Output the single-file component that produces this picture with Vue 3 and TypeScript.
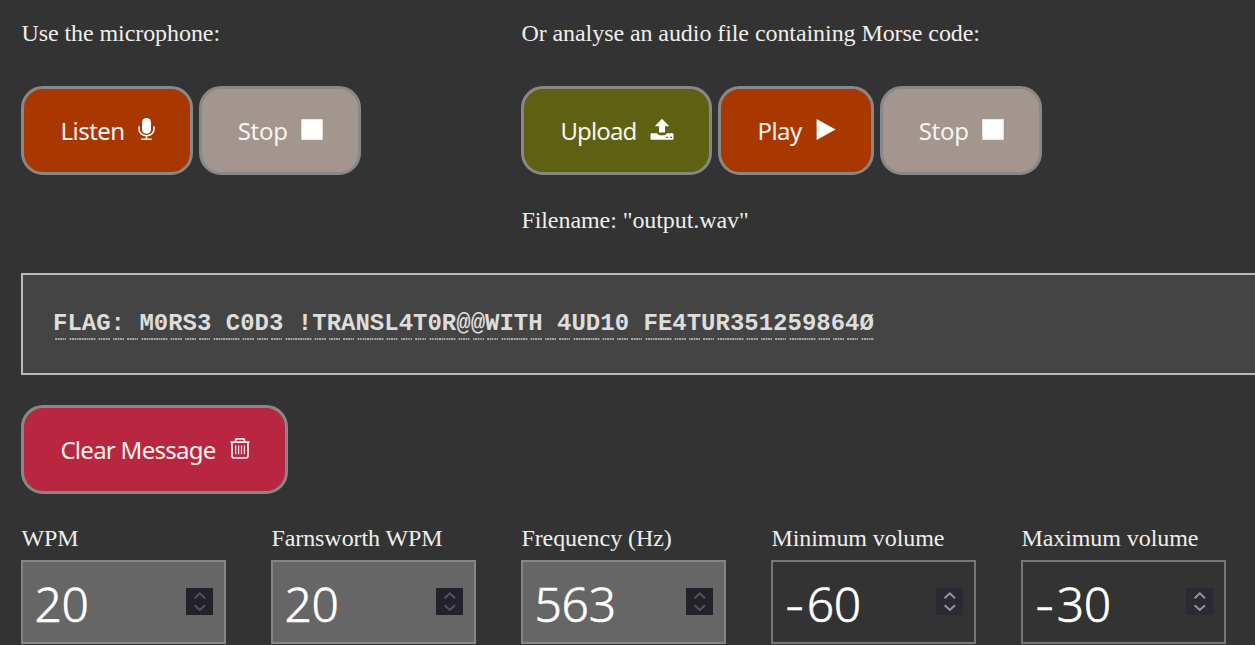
<script setup lang="ts">
type Tone = 'rust' | 'stone' | 'olive' | 'crimson'
type IconName = 'mic' | 'stop' | 'upload' | 'play' | 'trash'
interface Action { label: string; tone: Tone; icon: IconName; width: number }
interface Group { title: string; actions: Action[]; note?: string }
interface Field { label: string; sign?: string; value: string; disabled: boolean }

const groups: Group[] = [
  {
    title: 'Use the microphone:',
    actions: [
      { label: 'Listen', tone: 'rust', icon: 'mic', width: 172 },
      { label: 'Stop', tone: 'stone', icon: 'stop', width: 162 },
    ],
  },
  {
    title: 'Or analyse an audio file containing Morse code:',
    actions: [
      { label: 'Upload', tone: 'olive', icon: 'upload', width: 191 },
      { label: 'Play', tone: 'rust', icon: 'play', width: 156 },
      { label: 'Stop', tone: 'stone', icon: 'stop', width: 162 },
    ],
    note: 'Filename: "output.wav"',
  },
]
const clear: Action = { label: 'Clear Message', tone: 'crimson', icon: 'trash', width: 267 }
const message = 'FLAG: M0RS3 C0D3 !TRANSL4T0R@@WITH 4UD10 FE4TUR351259864Ø'
const fields: Field[] = [
  { label: 'WPM', value: '20', disabled: true },
  { label: 'Farnsworth WPM', value: '20', disabled: true },
  { label: 'Frequency (Hz)', value: '563', disabled: true },
  { label: 'Minimum volume', sign: '-', value: '60', disabled: false },
  { label: 'Maximum volume', sign: '-', value: '30', disabled: false },
]
</script>

<template>
  <main class="page">
    <section class="groups">
      <div v-for="g in groups" :key="g.title" class="group">
        <p class="text">{{ g.title }}</p>
        <div class="buttons">
          <button v-for="a in g.actions" :key="a.label" :class="['btn', a.tone]" :style="{ width: a.width + 'px' }">
            <span :class="['label', a.icon]">{{ a.label }}</span>
            <svg v-if="a.icon === 'mic'" class="icon" width="17" height="24" viewBox="0 0 17 24">
              <rect x="4" y="0.9" width="9" height="15.8" rx="4.5" fill="#fff" />
              <path d="M1 9.2v3.1a7.5 6.5 0 0 0 15 0V9.2M8.5 18.8v3.4M3.3 22.2h10.4" fill="none" stroke="#fff" stroke-width="1.5" />
            </svg>
            <svg v-else-if="a.icon === 'stop'" class="icon" width="22" height="24" viewBox="0 0 22 24">
              <path d="M.3 2.2h21.4v20.6H.3z" fill="#fff" />
            </svg>
            <svg v-else-if="a.icon === 'upload'" class="icon" width="24" height="24" viewBox="0 0 24 24">
              <path d="M12 1.8 19.2 9.2H15v6.4H9V9.2H4.8z" fill="#fff" />
              <path fill-rule="evenodd" d="M1.5 16.2h5.8c.4 1.3 1.4 2 2.7 2h4c1.3 0 2.3-.7 2.7-2h5.8q1 0 1 1v4.6q0 1-1 1h-21q-1 0-1-1v-4.6q0-1 1-1zM16.2 19.7v1.4h2v-1.4zM20 19.7v1.4h2v-1.4z" fill="#fff" />
            </svg>
            <svg v-else class="icon" width="20" height="24" viewBox="0 0 20 24">
              <path d="M.6 2v21L19.6 12.5z" fill="#fff" />
            </svg>
          </button>
        </div>
        <p v-if="g.note" class="text note">{{ g.note }}</p>
      </div>
    </section>

    <section class="message"><span class="code">{{ message }}</span></section>

    <div class="buttons">
      <button :class="['btn', clear.tone]" :style="{ width: clear.width + 'px' }">
        <span :class="['label', clear.icon]">{{ clear.label }}</span>
        <svg class="icon" width="20" height="24" viewBox="0 0 20 24" fill="none" stroke="#ffeef2">
          <path d="M.5 6.2h19M5.5 6V4.2q0-1.4 1.4-1.4h6.2q1.4 0 1.4 1.4V6M2 6.5v13.3q0 2.2 2.2 2.2h11.6q2.2 0 2.2-2.2V6.5" stroke-width="1.7" />
          <path d="M5.7 9.5v8.8M8.6 9.5v8.8M11.5 9.5v8.8M14.4 9.5v8.8" stroke-width="1.2" />
        </svg>
      </button>
    </div>

    <section class="fields">
      <label v-for="f in fields" :key="f.label" class="field">
        <span class="text">{{ f.label }}</span>
        <span :class="['input', { disabled: f.disabled }]">
          <span class="value"><span v-if="f.sign" class="sign">{{ f.sign }}</span>{{ f.value }}</span>
          <span class="spin">
            <svg width="27" height="27" viewBox="0 0 27 27" fill="none" stroke="currentColor" stroke-width="1.9">
              <path d="M8.6 10.3 13.8 5.4 19 10.3M8.6 17.2 13.8 22 19 17.2" />
            </svg>
          </span>
        </span>
      </label>
    </section>
  </main>
</template>

<style>
body { margin: 0; background: #333; overflow: hidden; }
</style>

<style scoped>
.page {
  box-sizing: border-box;
  width: 1255px;
  height: 645px;
  padding: 19px 0 0 21.4px;
  overflow: hidden;
  background: #333;
  color: #eee;
}
.text {
  display: block;
  margin: 0;
  font: 24px/28px "Liberation Serif", serif;
  letter-spacing: -0.07px;
  white-space: nowrap;
}
.groups { display: grid; grid-template-columns: 500px 1fr; height: 254px; }
.group .buttons { margin-top: 39px; }
.note { margin-top: 31px; }
.buttons { display: flex; gap: 6px; }
.btn {
  box-sizing: border-box;
  display: flex;
  align-items: center;
  justify-content: space-between;
  flex: none;
  height: 89px;
  padding: 0 35px 0 36px;
  border: 3px solid #888;
  border-radius: 22px;
  color: #f7f3f0;
  font: 380 24px/30px "Noto Sans", sans-serif;
}
.rust { background: #a83700; }
.stone { background: #a2968e; }
.olive { background: #5e6112; }
.crimson { background: #b9263f; }
.label { padding-top: 1px; white-space: nowrap; }
.label.mic { letter-spacing: -0.5px; }
.label.stop { margin-left: -0.7px; letter-spacing: -0.3px; }
.label.upload { letter-spacing: -0.85px; }
.label.play { letter-spacing: -0.5px; }
.label.trash { letter-spacing: -0.72px; }
.icon { flex: none; margin-top: -3px; }
.message {
  box-sizing: border-box;
  height: 102px;
  margin-bottom: 30px;
  padding: 35px 0 0 29.6px;
  border: 2px solid #bbb;
  border-right: 0;
  background: #444;
}
.code {
  position: relative;
  display: inline-block;
  color: #ddd;
  font: 700 24px/28px "Liberation Mono", monospace;
  white-space: pre;
}
.code::after {
  content: "";
  position: absolute;
  left: 0;
  right: 0;
  top: 28px;
  height: 2px;
  background: repeating-linear-gradient(90deg, #a2a2a2 0 1.3px, #707070 1.3px 2.4px);
  mask-image: repeating-linear-gradient(90deg, transparent 0 2px, #000 2px 13.3px, transparent 13.3px 16.3px, #000 16.3px 43px, transparent 43px 45.3px, #000 45.3px 56.7px, transparent 56.7px 59.7px, #000 59.7px 71px, transparent 71px 72px);
}
.fields { display: flex; gap: 45px; margin-top: 30px; }
.field { flex: none; width: 205px; }
.input {
  box-sizing: border-box;
  display: flex;
  align-items: center;
  justify-content: space-between;
  height: 84px;
  margin-top: 8px;
  padding: 0 11px;
  border: 2px solid #777;
  color: #fff;
}
.disabled { background: #666; border-color: #858585; }
.value {
  padding-top: 3px;
  font: 350 48px/60px "Noto Sans", sans-serif;
  letter-spacing: -0.2px;
  -webkit-text-stroke: 0.6px #fff;
}
.sign { display: inline-block; margin: 0 4.5px 0 2.5px; transform: scaleX(1.2); }
.spin { height: 27px; margin-top: -1px; background: #2b2a33; color: #9996a3; }
.disabled .spin { background: #23222a; color: #56545e; }
</style>
